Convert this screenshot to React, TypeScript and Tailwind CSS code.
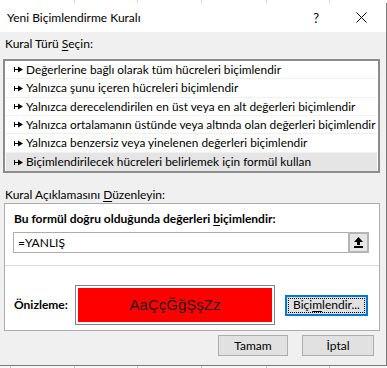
import React from "react";

const rules = [
  "Değerlerine bağlı olarak tüm hücreleri biçimlendir",
  "Yalnızca şunu içeren hücreleri biçimlendir",
  "Yalnızca derecelendirilen en üst veya en alt değerleri biçimlendir",
  "Yalnızca ortalamanın üstünde veya altında olan değerleri biçimlendir",
  "Yalnızca benzersiz veya yinelenen değerleri biçimlendir",
  "Biçimlendirilecek hücreleri belirlemek için formül kullan",
];

const rowHeights = ["h-[18px]", "h-[19px]", "h-[18px]", "h-[18px]", "h-[19px]", "h-[18px]"];

function RuleArrow() {
  return (
    <svg width="9" height="7" viewBox="0 0 9 7" className="shrink-0">
      <rect x="0" y="1" width="1" height="5" fill="#000" />
      <rect x="0" y="3" width="4" height="1" fill="#000" />
      <polygon points="4,0.5 9,3.5 4,6.5" fill="#000" />
    </svg>
  );
}

function CollapseIcon() {
  return (
    <svg width="9" height="11" viewBox="0 0 9 11">
      <polygon points="4.5,0 9,5 0,5" fill="#000" />
      <rect x="3" y="4" width="3" height="4" fill="#000" />
      <rect x="0" y="9" width="9" height="2" fill="#000" />
    </svg>
  );
}

function GridStrip({ height }: { height: string }) {
  return (
    <div className={`flex ${height} bg-[#f7f7f7]`}>
      <div className="w-[11px] border-r border-[#c8c8c8]" />
      <div className="w-[64px] border-r border-[#c8c8c8]" />
      <div className="w-[63px] border-r border-[#c8c8c8]" />
      <div className="w-[64px] border-r border-[#c8c8c8]" />
      <div className="w-[65px] border-r border-[#c8c8c8]" />
      <div className="w-[63px] border-r border-[#c8c8c8]" />
    </div>
  );
}

export default function App() {
  return (
    <div
      className="w-[387px] h-[368px] overflow-hidden bg-white text-[12px] leading-[16px] text-black"
      style={{ fontFamily: "Lato, 'Noto Sans', sans-serif" }}
    >
      <div className="h-[3px] bg-white flex">
        <div className="w-[75px] border-r border-[#d4d4d4]" />
        <div className="w-[63px] border-r border-[#d4d4d4]" />
        <div className="w-[64px] border-r border-[#d4d4d4]" />
        <div className="w-[65px] border-r border-[#d4d4d4]" />
        <div className="w-[63px] border-r border-[#d4d4d4]" />
      </div>

      <div className="w-[387px] h-[363px] bg-[#f0f0f0] border-r border-b border-[#7a7a7a] flex flex-col">
        {/* Title bar */}
        <div className="h-[29px] bg-white flex items-center pl-[7px]">
          <span className="text-[12px]">Yeni Biçimlendirme Kuralı</span>
          <span className="ml-auto mr-[37px] text-[13px]">?</span>
          <svg width="11" height="11" viewBox="0 0 11 11" className="mr-[19px]">
            <line x1="0.5" y1="0.5" x2="10.5" y2="10.5" stroke="#000" strokeWidth="1" />
            <line x1="10.5" y1="0.5" x2="0.5" y2="10.5" stroke="#000" strokeWidth="1" />
          </svg>
        </div>

        {/* Rule type */}
        <div className="pt-[4px] pl-[5px]">
          Kural Türü <span className="underline underline-offset-2">S</span>eçin:
        </div>
        <div className="mt-[7px] ml-[3px] w-[377px] border-2 border-[#8c8c8c] bg-white px-[1px] text-[11.85px]">
          {rules.map((r, i) => (
            <div
              key={r}
              className={`${rowHeights[i]} flex items-center gap-[3px] pl-[8px] whitespace-nowrap ${
                i === rules.length - 1 ? "bg-[#e5e5e5]" : "border-b border-[#f0f0f0]"
              }`}
            >
              <RuleArrow />
              <span>{r}</span>
            </div>
          ))}
        </div>

        {/* Rule description */}
        <div className="mt-[14px] pl-[5px]">
          Kural Açıklamasını <span className="underline underline-offset-2">D</span>üzenleyin:
        </div>
        <div className="ml-[4px] w-[376px] border border-[#adadad] bg-white">
          <div className="pt-[7px] pl-[9px] font-bold">
            Bu formül doğru olduğunda değerleri <span className="underline underline-offset-2">b</span>içimlendir:
          </div>
          <div className="mt-[5px] ml-[8px] w-[356px] h-[21px] flex">
            <div className="flex-1 border border-[#acacac] border-r-0 flex items-center pl-[4px]">=YANLIŞ</div>
            <div className="w-[21px] border-2 border-[#b4b4b4] bg-[#e6e6e6] flex items-center justify-center">
              <CollapseIcon />
            </div>
          </div>
          <div className="mt-[12px] h-px bg-[#d9d9d9]" />
          <div className="mt-[19px] mb-[5px] flex items-center pl-[9px]">
            <span className="w-[61px] shrink-0 font-bold">Önizleme:</span>
            <div className="w-[200px] h-[40px] shrink-0 border border-[#828282] bg-white p-[2px]">
              <div
                className="h-full bg-[#ff0000] flex items-center justify-center text-[15px] text-[#1a1a1a]"
                style={{ fontFamily: "'Liberation Sans', Arial, sans-serif" }}
              >
                AaÇçĞğŞşZz
              </div>
            </div>
            <div className="ml-[10px] w-[83px] h-[21px] shrink-0 border-2 border-[#0078d7] bg-[#e1e1e1] p-px">
              <div className="h-full border border-dotted border-black flex items-center justify-center">
                Biçi<span className="underline underline-offset-2">m</span>lendir...
              </div>
            </div>
          </div>
        </div>

        {/* Buttons */}
        <div className="mt-[4px] flex justify-end gap-[14px] pr-[12px]">
          <div className="w-[70px] h-[21px] border border-[#adadad] bg-[#e1e1e1] flex items-center justify-center">
            Tamam
          </div>
          <div className="w-[72px] h-[21px] border border-[#adadad] bg-[#e1e1e1] flex items-center justify-center">
            İptal
          </div>
        </div>
      </div>

      <GridStrip height="h-[2px]" />
    </div>
  );
}
